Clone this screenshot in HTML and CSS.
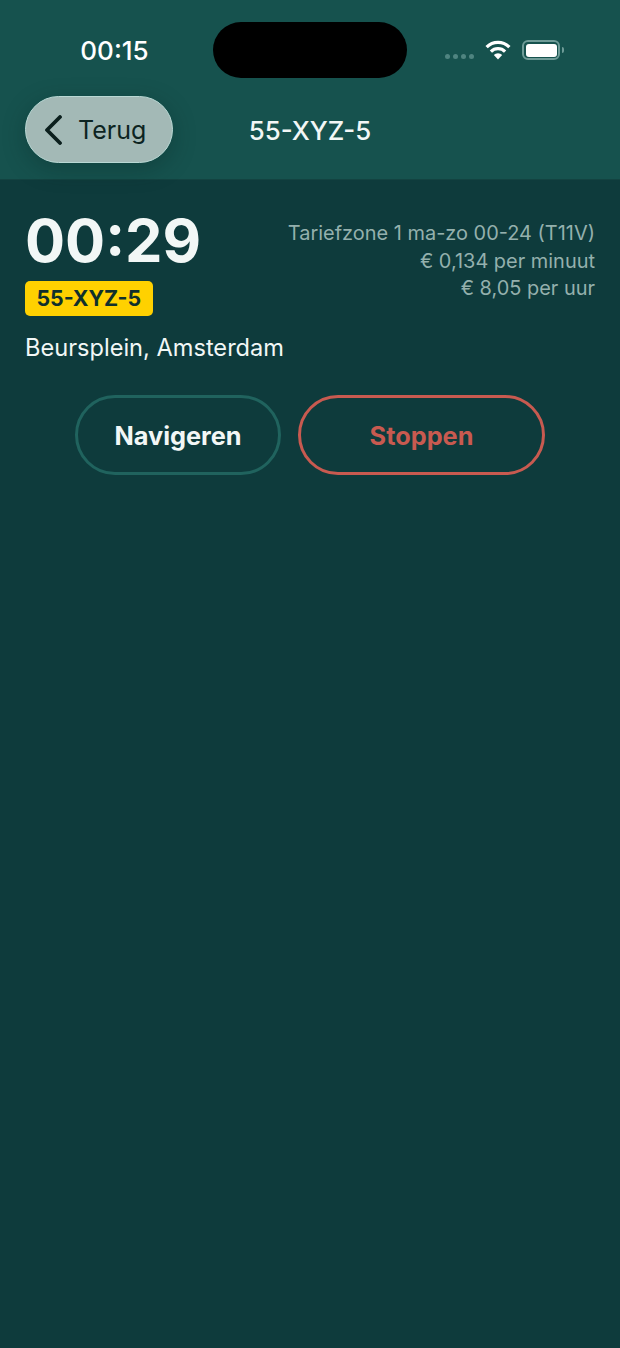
FILE: index.html
```html
<!DOCTYPE html>
<html lang="nl">
<head>
    <meta charset="UTF-8">
    <meta name="viewport" content="width=device-width, initial-scale=1.0">
    <title>Parkeersessie</title>
    <link rel="stylesheet" href="styles.css">
</head>
<body>
    <div class="top">
        <div class="statusbar">
            <span class="clock">00:15</span>
            <div class="island"></div>
            <div class="status-icons">
                <div class="signal"><i></i><i></i><i></i><i></i></div>
                <svg class="wifi" width="26" height="20" viewBox="0 0 26 20">
                    <path d="M13 19.5 8.8 15a6 6 0 0 1 8.4 0Z" fill="#fff"/>
                    <path d="M5.9 11.6a10 10 0 0 1 14.2 0" fill="none" stroke="#fff" stroke-width="3.2"/>
                    <path d="M1.6 7.2a16 16 0 0 1 22.8 0" fill="none" stroke="#fff" stroke-width="3.2"/>
                </svg>
                <div class="battery"><div class="battery-fill"></div></div>
                <div class="battery-cap"></div>
            </div>
        </div>
        <div class="navbar">
            <button class="back">
                <svg width="20" height="30" viewBox="0 0 20 30">
                    <path d="M16 2 3 15l13 13" fill="none" stroke="#0b1f1d" stroke-width="3.8" stroke-linecap="round" stroke-linejoin="round"/>
                </svg>
                <span>Terug</span>
            </button>
            <div class="nav-title">55-XYZ-5</div>
        </div>
    </div>

    <div class="content">
        <div class="summary">
            <div class="session">
                <div class="timer">00:29</div>
                <div class="plate">55-XYZ-5</div>
                <div class="location">Beursplein, Amsterdam</div>
            </div>
            <div class="tariff">
                <div>Tariefzone 1 ma-zo 00-24 (T11V)</div>
                <div>€ 0,134 per minuut</div>
                <div>€ 8,05 per uur</div>
            </div>
        </div>
        <div class="actions">
            <button class="btn btn-nav">Navigeren</button>
            <button class="btn btn-stop">Stoppen</button>
        </div>
    </div>
</body>
</html>
```

FILE: styles.css
```css
* {
    box-sizing: border-box;
}

html, body {
    height: 100%;
}

body {
    margin: 0;
    background: #0e3b3c;
    color: #f2f7f6;
    font-family: Inter, "Liberation Sans", sans-serif;
    overflow: hidden;
}

.top {
    height: 180px;
    background: #16524e;
    border-bottom: 1px solid #134341;
}

.statusbar {
    display: flex;
    align-items: center;
    height: 78px;
    padding-top: 22px;
}

.clock {
    width: 213px;
    padding-left: 16px;
    text-align: center;
    font-size: 26px;
    font-weight: 500;
    color: #fff;
}

.island {
    width: 194px;
    height: 56px;
    background: #000;
    border-radius: 28px;
}

.status-icons {
    display: flex;
    align-items: center;
    margin-left: 38px;
}

.signal {
    display: flex;
    gap: 3px;
    margin-top: 12px;
}

.signal i {
    width: 5px;
    height: 5px;
    border-radius: 50%;
    background: #4f8480;
}

.wifi {
    margin-left: 11px;
    margin-right: 11px;
}

.battery {
    width: 38px;
    height: 20px;
    padding: 1.5px;
    border: 2px solid #6f9c98;
    border-radius: 6px;
}

.battery-fill {
    height: 100%;
    background: #fff;
    border-radius: 3px;
}

.battery-cap {
    width: 2px;
    height: 6px;
    margin-left: 2px;
    background: #6f9c98;
    border-radius: 0 2px 2px 0;
}

.navbar {
    position: relative;
    display: flex;
    align-items: center;
    justify-content: center;
    height: 68px;
    margin-top: 18px;
}

.back {
    position: absolute;
    left: 25px;
    top: 0;
    display: flex;
    align-items: center;
    gap: 14px;
    width: 148px;
    height: 67px;
    padding: 0 0 0 18px;
    background: #a3b9b6;
    border: 1.5px solid #b9d8d4;
    border-radius: 34px;
    box-shadow: 0 6px 22px rgba(8, 40, 38, 0.35);
    color: #0d2422;
    font-family: inherit;
    font-size: 25px;
}

.nav-title {
    font-size: 25.8px;
    font-weight: 500;
}

.content {
    padding: 0 25px;
}

.summary {
    display: flex;
    justify-content: space-between;
}

.session {
    white-space: nowrap;
}

.timer {
    margin-top: 26px;
    font-size: 59.5px;
    font-weight: 700;
    line-height: 68px;
}

.plate {
    display: inline-block;
    margin-top: 7px;
    padding: 0 12px 0 11.5px;
    height: 35px;
    background: #ffd100;
    border-radius: 5px;
    color: #10302c;
    font-size: 21.3px;
    font-weight: 700;
    line-height: 35px;
}

.location {
    margin-top: 14px;
    font-size: 23.6px;
    line-height: 36px;
}

.tariff {
    margin-top: 40px;
    text-align: right;
    white-space: nowrap;
    color: #94b0ad;
    font-size: 19.95px;
    line-height: 27.5px;
}

.actions {
    display: flex;
    justify-content: center;
    gap: 17px;
    margin-top: 29px;
}

.btn {
    height: 80px;
    background: transparent;
    border-width: 3px;
    border-style: solid;
    border-radius: 40px;
    font-family: inherit;
    font-size: 25.3px;
    font-weight: 700;
}

.btn-nav {
    width: 206px;
    border-color: #20635e;
    color: #f2f7f6;
}

.btn-stop {
    width: 247px;
    border-color: #c85a50;
    color: #c85a50;
}
```
